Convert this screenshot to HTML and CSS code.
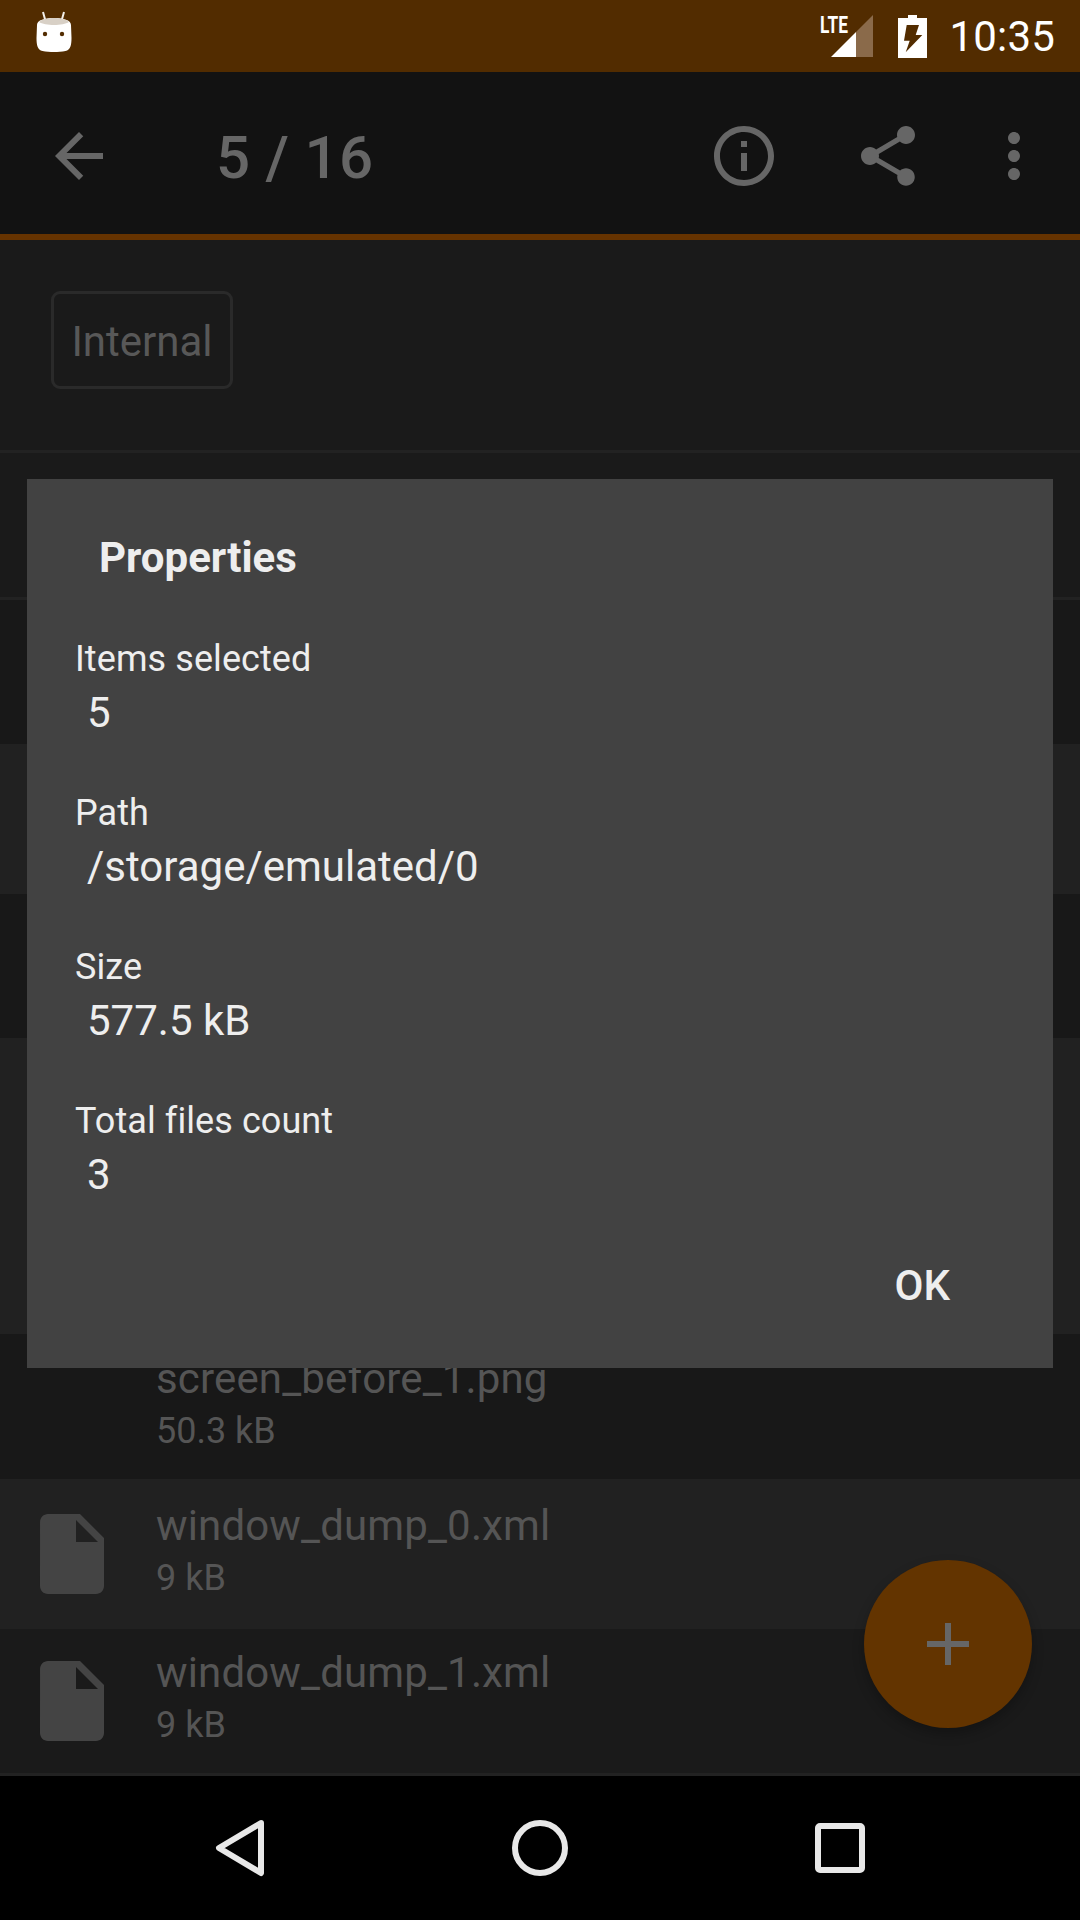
FILE: index.html
```html
<!DOCTYPE html>
<html lang="en">
  <head>
    <title>Properties</title>
    <link rel="stylesheet" href="styles.css">
  </head>
  <body>
    <div class="screen">
      <div class="status-bar">
        <svg class="status-logo" width="36" height="42" viewBox="0 0 36 42">
          <path d="M7 1l2.500 9M28 1l-2.500 9" stroke="#f3efe9" stroke-width="2" fill="none" />
          <path d="M1 14c0-5 8-7 17-7s17 2 17 7l0.500 13c0 7-1 12-6 13-7 1.300-16 1.300-23 0-5-1-6-6-6-13z" fill="#fff" />
          <path d="M3 11c3-3 9-4 15-4s12 1 15 4c-3 2-9 3-15 3s-12-1-15-3z" fill="#d8d0c6" />
          <circle cx="9" cy="23" r="2.200" fill="#522c00" />
          <circle cx="26" cy="23" r="2.200" fill="#522c00" />
        </svg>
        <div class="status-right">
          <div class="signal">
            <span class="lte">LTE</span>
            <svg width="42" height="42" viewBox="0 0 42 42">
              <polygon points="0,42 25,17 25,42" fill="#fff" />
              <polygon points="25,17 42,0 42,42 25,42" fill="#8a6a4a" />
            </svg>
          </div>
          <svg class="battery" width="29" height="43" viewBox="0 0 29 43">
            <path d="M10 0h9v3h10v40H0V3h10z" fill="#fff" />
            <polygon points="8.700,10 21,10 17.700,20 24.300,20 7.700,37.300 11.700,25.700 6,25.700" fill="#522c00" />
          </svg>
          <span class="clock">10:35</span>
        </div>
      </div>

      <div class="toolbar">
        <svg class="tool-icon" viewBox="0 0 24 24"><path d="M20 11H7.830l5.590-5.590L12 4l-8 8 8 8 1.410-1.410L7.830 13H20v-2z" /></svg>
        <div class="toolbar-title">5 / 16</div>
        <svg class="tool-icon tool-info" viewBox="0 0 24 24"><path d="M11 7h2v2h-2zm0 4h2v6h-2zm1-9C6.480 2 2 6.480 2 12s4.480 10 10 10 10-4.480 10-10S17.520 2 12 2zm0 18c-4.410 0-8-3.590-8-8s3.590-8 8-8 8 3.590 8 8-3.590 8-8 8z" /></svg>
        <svg class="tool-icon tool-share" viewBox="0 0 24 24"><path d="M18 16.080c-.76 0-1.440.3-1.960.77L8.910 12.700c.05-.23.09-.46.09-.7s-.04-.47-.09-.7l7.050-4.110c.54.5 1.250.81 2.040.81 1.660 0 3-1.340 3-3s-1.340-3-3-3-3 1.340-3 3c0 .24.04.47.09.7L8.040 9.810C7.500 9.310 6.790 9 6 9c-1.660 0-3 1.340-3 3s1.340 3 3 3c.79 0 1.500-.31 2.040-.81l7.120 4.160c-.05.21-.08.43-.08.65 0 1.610 1.310 2.920 2.920 2.920 1.610 0 2.920-1.310 2.920-2.920s-1.310-2.920-2.920-2.920z" /></svg>
        <svg class="tool-icon tool-more" viewBox="0 0 24 24"><path d="M12 8c1.100 0 2-.9 2-2s-.9-2-2-2-2 .9-2 2 .9 2 2 2zm0 2c-1.100 0-2 .9-2 2s.9 2 2 2 2-.9 2-2-.9-2-2-2zm0 6c-1.100 0-2 .9-2 2s.9 2 2 2 2-.9 2-2-.9-2-2-2z" /></svg>
      </div>

      <div class="content">
        <div class="path-bar">
          <div class="chip">Internal</div>
        </div>

        <div class="file-row row-plain row-line"></div>
        <div class="file-row row-dark row-line"></div>
        <div class="file-row row-light h150"></div>
        <div class="file-row row-dark h144"></div>
        <div class="file-row row-light"></div>
        <div class="file-row row-light h149"></div>
        <div class="file-row row-dark h145">
          <div class="file-slot"></div>
          <div class="file-text">
            <div class="file-name">screen_before_1.png</div>
            <div class="file-size">50.3 kB</div>
          </div>
        </div>
        <div class="file-row row-light h150">
          <div class="file-slot">
            <svg class="file-icon" viewBox="0 0 24 24"><path d="M6 2c-1.100 0-1.990.9-1.990 2L4 20c0 1.100.89 2 1.990 2H18c1.100 0 2-.9 2-2V8l-6-6H6zm7 7V3.500L18.500 9H13z" /></svg>
          </div>
          <div class="file-text">
            <div class="file-name">window_dump_0.xml</div>
            <div class="file-size">9 kB</div>
          </div>
        </div>
        <div class="file-row row-plain row-bottom">
          <div class="file-slot">
            <svg class="file-icon" viewBox="0 0 24 24"><path d="M6 2c-1.100 0-1.990.9-1.990 2L4 20c0 1.100.89 2 1.990 2H18c1.100 0 2-.9 2-2V8l-6-6H6zm7 7V3.500L18.500 9H13z" /></svg>
          </div>
          <div class="file-text">
            <div class="file-name">window_dump_1.xml</div>
            <div class="file-size">9 kB</div>
          </div>
        </div>

        <div class="fab">
          <svg width="72" height="72" viewBox="0 0 24 24"><path d="M19 13h-6v6h-2v-6H5v-2h6V5h2v6h6v2z" fill="#666" /></svg>
        </div>
      </div>

      <div class="nav-bar">
        <svg width="60" height="66" viewBox="0 0 60 66">
          <polygon points="51,8 9,33 51,58" fill="none" stroke="#e8e8e8" stroke-width="6" stroke-linejoin="round" />
        </svg>
        <svg width="60" height="60" viewBox="0 0 60 60">
          <circle cx="30" cy="30" r="25" fill="none" stroke="#e8e8e8" stroke-width="6" />
        </svg>
        <svg width="60" height="60" viewBox="0 0 60 60">
          <rect x="8" y="8" width="44" height="44" rx="2" fill="none" stroke="#e8e8e8" stroke-width="6" />
        </svg>
      </div>

      <div class="dialog">
        <div class="dialog-title">Properties</div>
        <div class="prop">
          <div class="prop-label">Items selected</div>
          <div class="prop-value">5</div>
        </div>
        <div class="prop">
          <div class="prop-label">Path</div>
          <div class="prop-value">/storage/emulated/0</div>
        </div>
        <div class="prop">
          <div class="prop-label">Size</div>
          <div class="prop-value">577.5 kB</div>
        </div>
        <div class="prop">
          <div class="prop-label">Total files count</div>
          <div class="prop-value">3</div>
        </div>
        <div class="dialog-actions">
          <span class="dialog-ok">OK</span>
        </div>
      </div>
    </div>
  </body>
</html>
```

FILE: styles.css
```css
body {
  margin: 0;
  font-family: Roboto, "Liberation Sans", sans-serif;
  background-color: #000;
}

.screen {
  position: relative;
  width: 1080px;
  height: 1920px;
  overflow: hidden;
  display: flex;
  flex-direction: column;
}

/* status bar */
.status-bar {
  height: 72px;
  background-color: #522c00;
  display: flex;
  align-items: center;
  justify-content: space-between;
  padding: 0 25px 0 36px;
  flex-shrink: 0;
}

.status-logo {
  margin-top: -8px;
}

.status-right {
  display: flex;
  align-items: center;
}

.signal {
  position: relative;
  width: 42px;
  height: 42px;
  margin-right: 25px;
}

.signal svg {
  display: block;
}

.lte {
  position: absolute;
  top: -4px;
  left: -11px;
  font-size: 24px;
  font-weight: 700;
  color: #fff;
  line-height: 28px;
  transform: scaleX(0.72);
  transform-origin: left center;
}

.battery {
  margin-right: 22px;
}

.clock {
  font-size: 42px;
  color: #fff;
  line-height: 50px;
  margin-top: 2px;
  letter-spacing: 0.2px;
}

/* toolbar */
.toolbar {
  height: 156px;
  padding-top: 6px;
  background-color: #121212;
  display: flex;
  align-items: center;
  border-bottom: 6px solid #663300;
  padding-left: 43px;
  flex-shrink: 0;
}

.tool-icon {
  width: 72px;
  height: 72px;
  fill: #666;
  flex-shrink: 0;
}

.toolbar-title {
  margin-left: 101px;
  margin-top: 3px;
  font-size: 60px;
  font-weight: 500;
  letter-spacing: 0.3px;
  color: #666;
  width: 492px;
}

.tool-share {
  margin-left: 72px;
}

.tool-more {
  margin-left: 54px;
}

/* list behind the dialog */
.content {
  position: relative;
  flex: 1;
  background-color: #1a1a1a;
}

.path-bar {
  height: 210px;
  display: flex;
  align-items: center;
  padding-left: 51px;
  padding-bottom: 11px;
  box-sizing: border-box;
}

.chip {
  width: 176px;
  height: 88px;
  padding-top: 4px;
  border: 3px solid #2a2a2a;
  border-radius: 9px;
  display: flex;
  align-items: center;
  justify-content: center;
  font-size: 42px;
  color: #585858;
}

.file-row {
  height: 147px;
  display: flex;
  align-items: center;
  box-sizing: border-box;
}

.h144 {
  height: 144px;
}

.h145 {
  height: 145px;
}

.h149 {
  height: 149px;
}

.h150 {
  height: 150px;
}

.row-plain {
  background-color: #1a1a1a;
}

.row-dark {
  background-color: #181818;
}

.row-light {
  background-color: #212121;
}

.row-line {
  border-top: 3px solid #222;
}

.row-bottom {
  border-bottom: 3px solid #222;
}

.file-slot {
  width: 156px;
  padding-left: 24px;
  box-sizing: border-box;
  flex-shrink: 0;
}

.file-icon {
  display: block;
  width: 96px;
  height: 96px;
  fill: #444;
}

.file-text {
  margin-top: -5px;
}

.file-name {
  font-size: 42px;
  line-height: 52px;
  letter-spacing: 0.15px;
  color: #555;
}

.file-size {
  font-size: 36px;
  line-height: 50px;
  margin-top: 1px;
  color: #555;
}

.fab {
  position: absolute;
  left: 864px;
  top: 1320px;
  width: 168px;
  height: 168px;
  border-radius: 50%;
  background-color: #633400;
  box-shadow: 0 6px 12px rgba(0, 0, 0, 0.25);
  display: flex;
  align-items: center;
  justify-content: center;
}

/* nav bar */
.nav-bar {
  height: 144px;
  background-color: #000;
  display: flex;
  align-items: center;
  flex-shrink: 0;
  padding-left: 210px;
}

.nav-bar svg:nth-child(2) {
  margin-left: 240px;
}

.nav-bar svg:nth-child(3) {
  margin-left: 240px;
}

/* properties dialog */
.dialog {
  position: absolute;
  left: 27px;
  top: 479px;
  width: 1026px;
  height: 889px;
  background-color: #424242;
  color: #eee;
  box-sizing: border-box;
  padding: 52px 48px 0;
}

.dialog-title {
  font-size: 42px;
  font-weight: 700;
  line-height: 54px;
  margin-left: 24px;
  margin-bottom: 49px;
}

.prop {
  height: 154px;
}

.prop-label {
  font-size: 36px;
  line-height: 50px;
  letter-spacing: 0.08px;
}

.prop-value {
  font-size: 42px;
  line-height: 54px;
  margin-left: 12px;
  margin-top: 2px;
}

.dialog-actions {
  display: flex;
  justify-content: flex-end;
  margin-top: 11px;
  padding-right: 55px;
}

.dialog-ok {
  font-size: 42px;
  font-weight: 500;
  line-height: 50px;
}
```
